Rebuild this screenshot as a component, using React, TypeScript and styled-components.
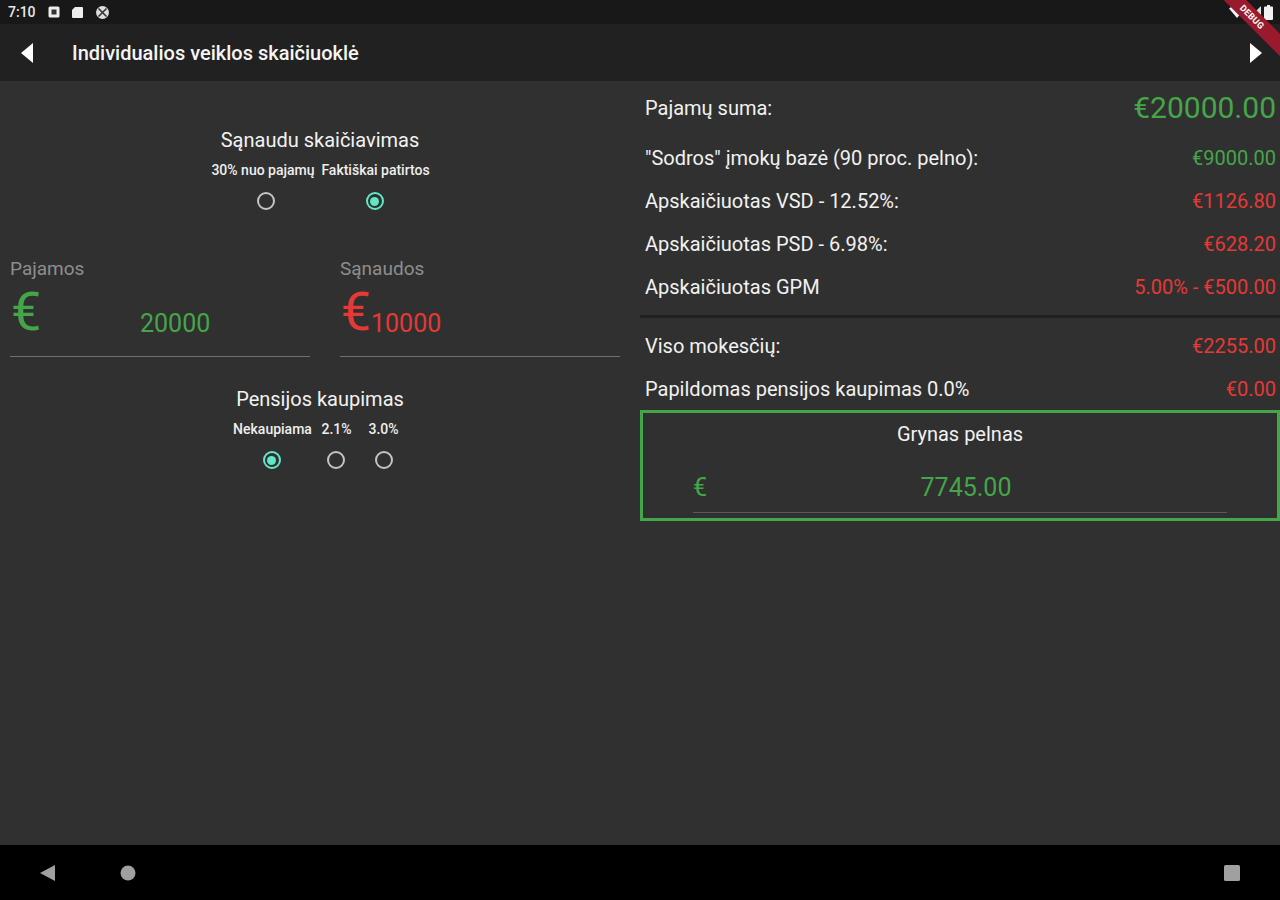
import React from "react";
import styled, { createGlobalStyle } from "styled-components";

const Global = createGlobalStyle`
  html, body { margin: 0; padding: 0; background: #303030; }
  body { font-family: Roboto, "Noto Sans", sans-serif; }
`;

const Screen = styled.div`
  position: relative;
  width: 1280px;
  height: 900px;
  overflow: hidden;
  display: flex;
  flex-direction: column;
  background: #303030;
  color: #fff;
`;

const StatusBar = styled.div`
  height: 24px;
  flex: none;
  background: #181818;
  display: flex;
  align-items: center;
  justify-content: space-between;
  padding: 0 8px;
  font-weight: 500;
  color: #e8e8e8;
`;

const StatusGroup = styled.div`
  display: flex;
  align-items: center;
  gap: 11px;
`;

const StatusTime = styled.span`
  margin-right: 1px;
  font-size: 14px;
`;

const AppBar = styled.div`
  height: 57px;
  flex: none;
  background: #212121;
  display: flex;
  align-items: center;
  justify-content: space-between;
  padding: 0 17px 0 20px;
`;

const AppBarLeft = styled.div`
  display: flex;
  align-items: center;
  gap: 37px;
`;

const AppTitle = styled.div`
  font-size: 20px;
  font-weight: 500;
  color: #f5f5f5;
`;

const Body = styled.div`
  flex: 1;
  display: flex;
  min-height: 0;
`;

const LeftPane = styled.div`
  width: 640px;
  flex: none;
  box-sizing: border-box;
  padding: 48px 10px 0 10px;
  display: flex;
  flex-direction: column;
`;

const SectionTitle = styled.div`
  width: 100%;
  text-align: center;
  font-size: 20px;
  line-height: 22px;
  color: #f2f2f2;
`;

const OptionRow = styled.div<{ $shift: number }>`
  display: flex;
  justify-content: center;
  gap: 7px;
  margin-top: 11px;
  transform: translateX(${(p) => p.$shift}px);
`;

const Option = styled.div<{ $w: number; $before?: number }>`
  width: ${(p) => p.$w}px;
  margin-left: ${(p) => p.$before ?? 0}px;
  display: flex;
  flex-direction: column;
  align-items: center;
`;

const OptionLabel = styled.div`
  font-size: 14px;
  line-height: 16px;
  font-weight: 500;
  color: #eeeeee;
  white-space: nowrap;
`;

const Radio = styled.div<{ $on?: boolean; $nudge?: number }>`
  width: 18px;
  height: 18px;
  box-sizing: border-box;
  margin-top: 14px;
  margin-left: ${(p) => p.$nudge ?? 0}px;
  border-radius: 50%;
  border: 2px solid ${(p) => (p.$on ? "#62e6c8" : "#c4c4c4")};
  display: flex;
  align-items: center;
  justify-content: center;
  &::after {
    content: "";
    width: 9px;
    height: 9px;
    border-radius: 50%;
    background: ${(p) => (p.$on ? "#62e6c8" : "transparent")};
  }
`;

const Fields = styled.div`
  display: flex;
  gap: 30px;
  margin-top: 49px;
`;

const Field = styled.div<{ $w: number }>`
  width: ${(p) => p.$w}px;
  height: 98px;
  box-sizing: border-box;
  border-bottom: 1.5px solid #707070;
  display: flex;
  flex-direction: column;
`;

const FieldLabel = styled.div`
  font-size: 19px;
  line-height: 20px;
  color: #8e8e8e;
`;

const FieldValueRow = styled.div<{ $color: string }>`
  display: flex;
  align-items: baseline;
  color: ${(p) => p.$color};
  margin-top: 1px;
`;

const BigEuro = styled.span`
  font-size: 54px;
  line-height: 64px;
  margin-left: 1px;
  width: 31px;
`;

const FieldValue = styled.span<{ $offset: number }>`
  font-size: 25px;
  margin-left: ${(p) => p.$offset}px;
  transform: translateY(2px);
`;

const PensionTitle = styled(SectionTitle)`
  margin-top: 31px;
`;

const RightPane = styled.div`
  flex: 1;
  box-sizing: border-box;
  padding: 5px 4px 0 5px;
  display: flex;
  flex-direction: column;
`;

const Row = styled.div<{ $after?: number }>`
  height: 43px;
  margin-bottom: ${(p) => p.$after ?? 0}px;
  flex: none;
  display: flex;
  align-items: center;
  justify-content: space-between;
  font-size: 20px;
  color: #f2f2f2;
`;

const Amount = styled.span<{ $color: string; $size?: number }>`
  color: ${(p) => p.$color};
  font-size: ${(p) => p.$size ?? 20}px;
`;

const Divider = styled.div`
  height: 3px;
  margin: 7px -4px 6px -5px;
  background: #212121;
`;

const ResultBox = styled.div`
  margin: 0 -4px 0 -5px;
  height: 111px;
  box-sizing: border-box;
  border: 3px solid #45a649;
  display: flex;
  flex-direction: column;
  align-items: center;
  flex: none;
`;

const ResultTitle = styled.div`
  font-size: 20px;
  line-height: 22px;
  margin-top: 10px;
  color: #f2f2f2;
`;

const ResultLine = styled.div`
  width: 534px;
  height: 49px;
  margin-top: 19px;
  padding-bottom: 2px;
  box-sizing: border-box;
  border-bottom: 1px solid #5a5a5a;
  display: flex;
  align-items: center;
  color: #45a649;
  font-size: 25px;
`;

const ResultEuro = styled.span`
  width: 14px;
`;

const ResultValue = styled.span`
  flex: 1;
  text-align: center;
  padding-right: 2px;
`;

const NavBar = styled.div`
  height: 55px;
  flex: none;
  background: #000;
  display: flex;
  align-items: center;
  justify-content: space-between;
  padding: 0 39px 0 39px;
`;

const NavLeft = styled.div`
  display: flex;
  align-items: center;
  gap: 64px;
`;

const Banner = styled.div`
  position: absolute;
  top: 9px;
  right: -30px;
  width: 116px;
  height: 16px;
  transform: rotate(45deg);
  background: #981a2c;
  color: #fff;
  font-size: 9px;
  font-weight: 700;
  line-height: 16px;
  text-align: center;
  letter-spacing: 0.3px;
`;

const StatusIcons = styled(StatusGroup)`
  gap: 2px;
  margin-right: -1px;
`;

const App = () => (
  <Screen>
    <Global />
    <StatusBar>
      <StatusGroup>
        <StatusTime>7:10</StatusTime>
        <svg width="12" height="12" viewBox="0 0 12 12">
          <rect x="0.5" y="0.5" width="11" height="11" rx="1.5" fill="#eee" />
          <rect x="3.5" y="3.5" width="5" height="5" fill="#333" />
        </svg>
        <svg width="13" height="13" viewBox="0 0 13 13">
          <path d="M4 1h7a1 1 0 0 1 1 1v9a1 1 0 0 1-1 1H2a1 1 0 0 1-1-1V4z" fill="#eee" />
        </svg>
        <svg width="15" height="15" viewBox="0 0 15 15">
          <circle cx="7.5" cy="7.5" r="6.5" fill="#ddd" />
          <path d="M3.5 3.5l8 8M11.5 3.5l-8 8" stroke="#333" strokeWidth="1.6" />
        </svg>
      </StatusGroup>
      <StatusIcons>
        <svg width="18" height="14" viewBox="0 0 18 14">
          <path d="M1 3.5C5.500-.5 12.500-.5 17 3.500L9 13z" fill="#f2f2f2" />
        </svg>
        <svg width="14" height="14" viewBox="0 0 14 14">
          <path d="M13 1v12H1z" fill="#e0e0e0" />
        </svg>
        <svg width="9" height="15" viewBox="0 0 9 15">
          <path d="M3 0h3v1.500h2a1 1 0 0 1 1 1V14a1 1 0 0 1-1 1H1a1 1 0 0 1-1-1V2.500a1 1 0 0 1 1-1h2z" fill="#f2f2f2" />
        </svg>
      </StatusIcons>
    </StatusBar>
    <AppBar>
      <AppBarLeft>
        <svg width="15" height="22" viewBox="0 0 15 22">
          <path d="M13 1v20L1 11z" fill="#fff" />
        </svg>
        <AppTitle>Individualios veiklos skaičiuoklė</AppTitle>
      </AppBarLeft>
      <svg width="15" height="22" viewBox="0 0 15 22">
        <path d="M2 1v20l12-10z" fill="#fff" />
      </svg>
    </AppBar>
    <Body>
      <LeftPane>
        <SectionTitle>Sąnaudu skaičiavimas</SectionTitle>
        <OptionRow $shift={0}>
          <Option $w={104}>
            <OptionLabel>30% nuo pajamų</OptionLabel>
            <Radio $nudge={6} />
          </Option>
          <Option $w={107}>
            <OptionLabel>Faktiškai patirtos</OptionLabel>
            <Radio $on $nudge={-2} />
          </Option>
        </OptionRow>
        <Fields>
          <Field $w={300}>
            <FieldLabel>Pajamos</FieldLabel>
            <FieldValueRow $color="#45a649">
              <BigEuro>€</BigEuro>
              <FieldValue $offset={98}>20000</FieldValue>
            </FieldValueRow>
          </Field>
          <Field $w={280}>
            <FieldLabel>Sąnaudos</FieldLabel>
            <FieldValueRow $color="#e53935">
              <BigEuro>€</BigEuro>
              <FieldValue $offset={-1}>10000</FieldValue>
            </FieldValueRow>
          </Field>
        </Fields>
        <PensionTitle>Pensijos kaupimas</PensionTitle>
        <OptionRow $shift={-4}>
          <Option $w={78}>
            <OptionLabel>Nekaupiama</OptionLabel>
            <Radio $on $nudge={-2} />
          </Option>
          <Option $w={30} $before={3}>
            <OptionLabel>2.1%</OptionLabel>
            <Radio $nudge={-2} />
          </Option>
          <Option $w={30} $before={10}>
            <OptionLabel>3.0%</OptionLabel>
            <Radio />
          </Option>
        </OptionRow>
      </LeftPane>
      <RightPane>
        <Row $after={7}>
          <span>Pajamų suma:</span>
          <Amount $color="#45a649" $size={30}>€20000.00</Amount>
        </Row>
        <Row>
          <span>"Sodros" įmokų bazė (90 proc. pelno):</span>
          <Amount $color="#45a649">€9000.00</Amount>
        </Row>
        <Row>
          <span>Apskaičiuotas VSD - 12.52%:</span>
          <Amount $color="#e53935">€1126.80</Amount>
        </Row>
        <Row>
          <span>Apskaičiuotas PSD - 6.98%:</span>
          <Amount $color="#e53935">€628.20</Amount>
        </Row>
        <Row>
          <span>Apskaičiuotas GPM</span>
          <Amount $color="#e53935">5.00% - €500.00</Amount>
        </Row>
        <Divider />
        <Row>
          <span>Viso mokesčių:</span>
          <Amount $color="#e53935">€2255.00</Amount>
        </Row>
        <Row>
          <span>Papildomas pensijos kaupimas 0.0%</span>
          <Amount $color="#e53935">€0.00</Amount>
        </Row>
        <ResultBox>
          <ResultTitle>Grynas pelnas</ResultTitle>
          <ResultLine>
            <ResultEuro>€</ResultEuro>
            <ResultValue>7745.00</ResultValue>
          </ResultLine>
        </ResultBox>
      </RightPane>
    </Body>
    <NavBar>
      <NavLeft>
        <svg width="17" height="18" viewBox="0 0 17 18">
          <path d="M16 1v16L1 9z" fill="#a0a0a0" />
        </svg>
        <svg width="16" height="16" viewBox="0 0 16 16">
          <circle cx="8" cy="8" r="7.500" fill="#a0a0a0" />
        </svg>
      </NavLeft>
      <svg width="18" height="18" viewBox="0 0 18 18">
        <rect x="1" y="1" width="16" height="16" rx="1.500" fill="#a0a0a0" />
      </svg>
    </NavBar>
    <Banner>DEBUG</Banner>
  </Screen>
);

export default App;
